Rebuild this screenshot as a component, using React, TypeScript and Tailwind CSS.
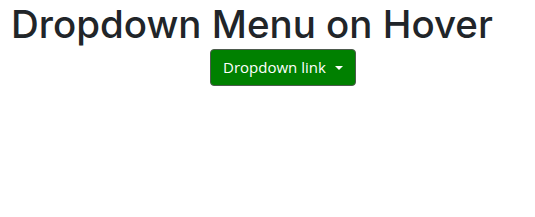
export default function App() {
  return (
    <div className="bg-white w-[535px] h-[217px] text-[#212529]" style={{ fontFamily: '"Open Sans", sans-serif' }}>
      <h1 className="pl-[11px] text-[38.5px] leading-[48px] font-medium whitespace-nowrap" style={{ fontFamily: 'Inter, sans-serif' }}>Dropdown Menu on Hover</h1>
      <div className="flex pl-[210px] mt-px">
        <button className="flex items-center gap-[9px] h-[37px] px-[12px] bg-[#008000] text-white text-[15px] border border-[#4d5a4d] rounded-[4px]">
          <span>Dropdown link</span>
          <span className="w-0 h-0 border-l-[4px] border-r-[4px] border-t-[4px] border-l-transparent border-r-transparent border-t-white mt-px" />
        </button>
      </div>
    </div>
  )
}
